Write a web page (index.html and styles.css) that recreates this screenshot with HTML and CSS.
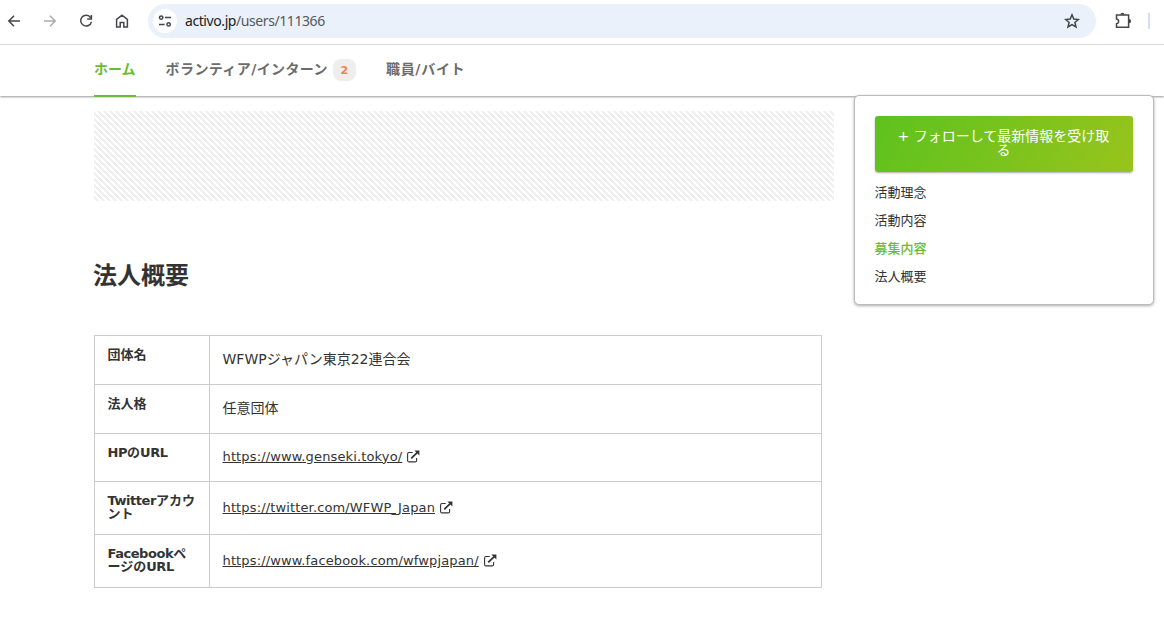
FILE: index.html
```html
<!DOCTYPE html>
<html lang="ja">
<head>
<meta charset="utf-8">
<title>activo</title>
<link rel="stylesheet" href="styles.css">
</head>
<body>
<svg class="defs" aria-hidden="true">
  <symbol id="external" viewBox="0 0 14 14">
    <path d="M6.7 2.5H3Q1.6 2.5 1.6 3.9V10.5Q1.6 11.9 3 11.9H9.2Q10.6 11.9 10.6 10.5V8" fill="none" stroke="currentColor" stroke-width="1.1"/>
    <path d="M5.2 8.3L11.2 2.6" stroke="currentColor" stroke-width="1.8"/>
    <path d="M8.4 .6H13.4V5.6Z" fill="currentColor"/>
  </symbol>
</svg>
<header class="toolbar">
  <svg class="tool" viewBox="0 0 16 16"><path d="M14 8H3M8 2.8L2.8 8L8 13.2"/></svg>
  <svg class="tool tool-off" viewBox="0 0 16 16"><path d="M2 8H13M8 2.8L13.2 8L8 13.2"/></svg>
  <svg class="tool" viewBox="0 0 16 16"><path d="M12.6 4.6A5.4 5.4 0 1 0 13.4 8.8M13.4 2V6.1H9.2"/></svg>
  <svg class="tool" viewBox="0 0 16 16"><path d="M2.6 6.4L8 2.1L13.4 6.4V14H9.8V9.4H6.2V14H2.6Z"/></svg>
  <div class="address">
    <span class="site-info"><svg viewBox="0 0 16 16"><circle cx="4.2" cy="4.6" r="1.7"/><path d="M8 4.6H14M2 11.4H7.6"/><circle cx="11.6" cy="11.4" r="1.7"/></svg></span>
    <span class="url">activo.jp<span class="path">/users/111366</span></span>
    <svg class="star" viewBox="0 0 16 16"><path d="M8 1.8L9.8 6.1L14.4 6.5L10.9 9.5L12 14L8 11.6L4 14L5.1 9.5L1.6 6.5L6.2 6.1Z"/></svg>
  </div>
  <svg class="extension" viewBox="0 0 18 18"><path d="M2.5 3H14.6V15.3H2.5V11.7Q4.6 11.5 4.6 9.3T2.5 6.9Z"/><path class="solid" d="M6.4 2.8A2.1 2.1 0 0 1 10.6 2.8ZM15 7.1A2.1 2.1 0 0 1 15 11.3Z"/></svg>
  <span class="separator"></span>
</header>
<nav class="tabs">
  <a class="tab tab-active">ホーム</a>
  <a class="tab tab-wide">ボランティア/インターン<span class="count">2</span></a>
  <a class="tab tab-wide">職員/バイト</a>
</nav>
<div class="content">
  <main class="main">
    <div class="hatch"></div>
    <h2 class="heading">法人概要</h2>
    <dl class="profile">
      <div class="row"><dt>団体名</dt><dd class="plain">WFWPジャパン東京22連合会</dd></div>
      <div class="row"><dt>法人格</dt><dd class="plain">任意団体</dd></div>
      <div class="row row-short"><dt><span class="latin">HP</span>の<span class="latin">URL</span></dt><dd class="plain"><a>https://www.genseki.tokyo/</a><svg><use href="#external"/></svg></dd></div>
      <div class="row row-tall"><dt><span class="latin">Twitter</span>アカウ<br>ント</dt><dd><a>https://twitter.com/WFWP_Japan</a><svg><use href="#external"/></svg></dd></div>
      <div class="row row-tall"><dt><span class="latin">Facebook</span>ペ<br>ージの<span class="latin">URL</span></dt><dd><a>https://www.facebook.com/wfwpjapan/</a><svg><use href="#external"/></svg></dd></div>
    </dl>
  </main>
  <aside class="card">
    <button class="follow">+ フォローして最新情報を受け取<br>る</button>
    <ul class="index">
      <li>活動理念</li>
      <li>活動内容</li>
      <li class="current">募集内容</li>
      <li>法人概要</li>
    </ul>
  </aside>
</div>
</body>
</html>
```

FILE: styles.css
```css
* { box-sizing: border-box; }
body {
  margin: 0;
  height: 640px;
  overflow: hidden;
  background: #fff;
  color: #333;
  font: 14px/14px "DejaVu Sans", "Noto Sans CJK JP", sans-serif;
}
.defs { display: none; }
.toolbar {
  display: flex;
  align-items: center;
  height: 45px;
  padding: 0 0 3px 6px;
  border-bottom: 1px solid #dcdfe0;
}
.toolbar svg { fill: none; stroke: #444649; stroke-width: 1.5; flex: none; }
.tool { width: 16px; height: 16px; margin-right: 20px; }
.toolbar .tool-off { stroke: #aaa; }
.address {
  display: flex;
  align-items: center;
  width: 948px;
  height: 34px;
  margin-left: -2px;
  padding: 0 16px 0 5px;
  border-radius: 17px;
  background: #ebf1fa;
}
.site-info {
  display: flex;
  align-items: center;
  justify-content: center;
  width: 24px;
  height: 24px;
  border-radius: 50%;
  background: #fff;
}
.site-info svg { width: 16px; height: 16px; }
.url { margin-left: 8px; font: 14px/20px "Noto Sans", sans-serif; letter-spacing: -.42px; color: #202124; }
.path { color: #55585c; }
.star { width: 16px; height: 16px; margin-left: auto; }
.extension { width: 18px; height: 18px; margin-left: 18px; }
.toolbar .solid { fill: #444649; stroke: none; }
.separator { width: 2px; height: 16px; margin-left: 16px; background: #cfe0f8; }
.tabs {
  display: flex;
  gap: 30px;
  height: 51px;
  padding-left: 94px;
  box-shadow: 0 1px 2px #999;
}
.tab {
  display: flex;
  height: 52px;
  padding-top: 17px;
  color: #6c6c6c;
  font-weight: bold;
}
.tab-active { color: #69bd2e; border-bottom: 2px solid #6cba3b; }
.tab-wide { letter-spacing: .4px; }
.tab-wide + .tab-wide { letter-spacing: .7px; }
.count {
  width: 23px;
  height: 22px;
  margin: -3px 0 0 5px;
  border-radius: 8px;
  background: #eee;
  color: #f58440;
  font-size: 11px;
  line-height: 23px;
  text-align: center;
}
.content { display: flex; padding-left: 94px; }
.main { width: 740px; padding-top: 15px; }
.hatch {
  height: 90px;
  background: linear-gradient(45deg, #fff 25%, #efefef 25% 50%, #fff 50% 75%, #efefef 75%) 0 0 / 6px 6px;
}
.heading { margin: 63px 0 0 -1px; font-size: 24px; line-height: 24px; }
.profile {
  width: 728px;
  margin: 47px 0 0;
  border: solid #ccc;
  border-width: 1px 1px 0;
}
.row { display: flex; height: 49px; border-bottom: 1px solid #ccc; }
.row-short { height: 48px; }
.row-tall { height: 53px; }
dt {
  width: 115px;
  padding: 12px 0 0 12.5px;
  border-right: 1px solid #ccc;
  font-size: 13px;
  line-height: 13px;
  font-weight: bold;
  white-space: nowrap;
}
.latin { letter-spacing: -.45px; }
dd { display: flex; align-items: center; margin: 0; padding-left: 12.5px; }
.plain { padding-bottom: 2px; }
dd a { text-decoration: underline; font-size: 13px; letter-spacing: .14px; }
dd svg { width: 14px; height: 14px; margin-left: 4px; }
.card {
  width: 300px;
  height: 210px;
  margin: -1px 0 0 20px;
  padding: 20px 20px 19px;
  border: 1px solid #bbb;
  border-radius: 5px;
  background: #fff;
  box-shadow: 0 1px 3px #aaa;
}
.follow {
  display: block;
  width: 258px;
  height: 56px;
  padding: 0 1px 3px 0;
  border: 0;
  border-radius: 3px;
  background: linear-gradient(120deg, #5dc21e, #98c41c);
  box-shadow: 0 1px 2px #aaa;
  color: #fff;
  font: 14px/14px "DejaVu Sans", "Noto Sans CJK JP", sans-serif;
}
.index { margin: 7px 0 0 -.5px; padding: 0; list-style: none; font-size: 13px; line-height: 28px; }
.current { color: #69bd2e; font-weight: 500; }
```
